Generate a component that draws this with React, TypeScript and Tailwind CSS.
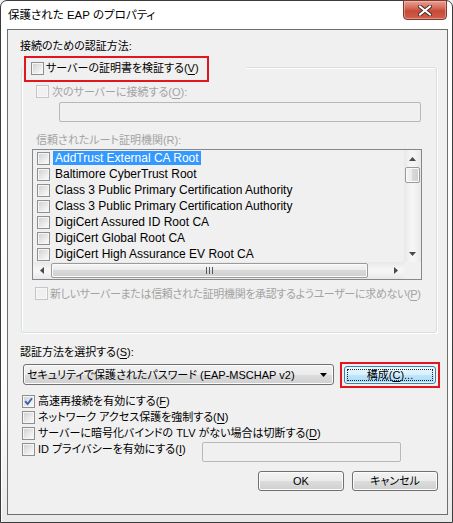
import React from "react";

const F = "font-['Liberation_Sans','Noto_Sans_CJK_JP',sans-serif] [font-feature-settings:'palt']";

function Check({ checked = false, disabled = false }: { checked?: boolean; disabled?: boolean }) {
  return (
    <span
      className={`relative block w-[13px] h-[13px] shrink-0 border ${
        disabled ? "border-[#c6c6c6] bg-[#f7f7f7]" : "border-[#8e8f8f] bg-[#f5f5f5]"
      }`}
    >
      <span
        className={`absolute inset-[1px] ${
          disabled ? "bg-[#f0f0f0]" : "bg-gradient-to-br from-[#d3d3d3] to-[#fafafa]"
        }`}
      />
      {checked && (
        <svg className="absolute left-[1px] top-[1px]" width="9" height="9" viewBox="0 0 9 9">
          <path d="M1.2 4.2 L3.6 7 L8 1.2" fill="none" stroke="#3c5ea8" strokeWidth="1.9" />
        </svg>
      )}
    </span>
  );
}

function U({ children }: { children: React.ReactNode }) {
  return <span className="underline underline-offset-[2px]">{children}</span>;
}

function WinButton({ children, className = "" }: { children: React.ReactNode; className?: string }) {
  return (
    <div
      className={`flex items-center justify-center rounded-[3px] border border-[#707070] bg-[linear-gradient(#f2f2f2_0%,#ebebeb_50%,#dddddd_50%,#cfcfcf_100%)] shadow-[inset_0_0_0_1px_#fcfcfc] text-black ${className}`}
    >
      {children}
    </div>
  );
}

const certs = [
  "AddTrust External CA Root",
  "Baltimore CyberTrust Root",
  "Class 3 Public Primary Certification Authority",
  "Class 3 Public Primary Certification Authority",
  "DigiCert Assured ID Root CA",
  "DigiCert Global Root CA",
  "DigiCert High Assurance EV Root CA",
];

function Tri({ dir }: { dir: "up" | "down" | "left" | "right" }) {
  const d =
    dir === "up"
      ? "M0 4 L3.5 0 L7 4 Z"
      : dir === "down"
      ? "M0 0 L7 0 L3.5 4 Z"
      : dir === "left"
      ? "M4 0 L4 7 L0 3.5 Z"
      : "M0 0 L4 3.5 L0 7 Z";
  const w = dir === "up" || dir === "down" ? 7 : 4;
  const h = dir === "up" || dir === "down" ? 4 : 7;
  return (
    <svg width={w} height={h} viewBox={`0 0 ${w} ${h}`}>
      <path d={d} fill="#4a4a4a" />
    </svg>
  );
}

export default function App() {
  return (
    <div className={`w-[453px] h-[523px] overflow-hidden bg-[#f0f0f0] ${F} text-[11px] text-black`}>
      <div className="flex flex-col w-[453px] h-[523px] rounded-t-[7px] border border-[#3b3b3b] bg-[linear-gradient(#ffffff,#fbfbfb_80%,#e9e9e9)] shadow-[inset_1px_1px_0_#ffffff]">
        {/* title bar */}
        <div className="flex h-[28px] shrink-0">
          <div className="pl-[7px] pt-[6px] text-[11.5px] leading-[16px] text-black">保護された EAP のプロパティ</div>
          <div className="ml-auto mr-[5px] -mt-[1px] flex h-[20px] w-[44px] items-center justify-center rounded-b-[4px] border border-[#7a3a33] bg-[linear-gradient(#e8a090_0%,#d7705f_35%,#c64a38_55%,#d0604c_100%)] shadow-[inset_0_0_0_1px_rgba(255,210,200,0.45)]">
            <svg width="14" height="11" viewBox="0 0 14 11">
              <path d="M2 1.5 L12 9.5 M12 1.5 L2 9.5" stroke="#4a2a28" strokeWidth="4" strokeLinecap="square" />
              <path d="M2 1.5 L12 9.5 M12 1.5 L2 9.5" stroke="#ffffff" strokeWidth="2" strokeLinecap="square" />
            </svg>
          </div>
        </div>

        {/* client area */}
        <div className="ml-[6px] w-[441px] h-[486px] border border-[#6e6e6e] bg-[#f0f0f0] flex flex-col">
          <div className="pl-[12px] pt-[8px] h-[24px] leading-[16px]">接続のための認証方法:</div>

          {/* group box */}
          <div className="relative ml-[13px] mt-[13px] w-[416px] h-[266px] rounded-[3px] border border-[#d5dfe5] shadow-[inset_1px_1px_0_#ffffff,1px_1px_0_#ffffff]">
            {/* group header */}
            <div className="absolute left-[0px] top-[-9px] w-[224px] h-[18px] bg-[#f0f0f0] flex items-center pl-[9px]">
              <Check />
              <span className="ml-[2px] leading-[16px] whitespace-nowrap">
                サーバーの証明書を検証する(<U>V</U>)
              </span>
            </div>
            {/* annotation */}
            <div className="absolute left-[2px] top-[-12px] w-[185px] h-[26px] border-2 border-[#e3151f]" />

            <div className="flex flex-col pt-[17px]">
              <div className="flex items-center h-[13px] pl-[14px] text-[#a3a3a3]">
                <Check disabled />
                <span className="ml-[3px] leading-[16px]">
                  次のサーバーに接続する(<U>O</U>):
                </span>
              </div>
              <div className="ml-[37px] mt-[4px] w-[362px] h-[20px] rounded-[2px] border border-[#b8b8b8] bg-[#f0f0f0]" />
              <div className="pl-[14px] mt-[10px] h-[16px] leading-[16px] text-[#a3a3a3]">
                信頼されたルート証明機関(R):
              </div>

              {/* listbox */}
              <div className="ml-[10px] mt-[1px] w-[390px] h-[131px] border border-[#828790] bg-[#f0f0f0] flex flex-col text-[12px]">
                <div className="flex h-[112px]">
                  <div className="flex-1 flex flex-col overflow-hidden">
                    {certs.map((c, i) => (
                      <div key={i} className="flex items-center h-[16px] pl-[4px] whitespace-nowrap">
                        <Check />
                        <span
                          className={`ml-[3px] px-[2px] h-[14px] leading-[14px] ${
                            i === 0 ? "bg-[#3399ff] text-white" : ""
                          }`}
                        >
                          {c}
                        </span>
                      </div>
                    ))}
                  </div>
                  {/* vertical scrollbar */}
                  <div className="w-[17px] h-[112px] flex flex-col bg-[linear-gradient(90deg,#e8e8e8,#f5f5f5_40%,#f5f5f5_60%,#e8e8e8)]">
                    <div className="h-[17px] flex items-center justify-center">
                      <Tri dir="up" />
                    </div>
                    <div className="mx-[1px] h-[16px] rounded-[2px] border border-[#9b9b9b] bg-[linear-gradient(90deg,#f6f6f6,#ebebeb_45%,#d9d9d9_50%,#cfcfcf)] shadow-[inset_0_0_0_1px_#fafafa]" />
                    <div className="flex-1" />
                    <div className="h-[17px] flex items-center justify-center">
                      <Tri dir="down" />
                    </div>
                  </div>
                </div>
                {/* horizontal scrollbar */}
                <div className="flex h-[17px]">
                  <div className="flex-1 flex bg-[linear-gradient(#e8e8e8,#f5f5f5_40%,#f5f5f5_60%,#e8e8e8)]">
                    <div className="w-[17px] flex items-center justify-center">
                      <Tri dir="left" />
                    </div>
                    <div className="ml-[1px] my-[1px] w-[317px] rounded-[2px] border border-[#9b9b9b] bg-[linear-gradient(#f6f6f6,#ebebeb_45%,#d9d9d9_50%,#cfcfcf)] shadow-[inset_0_0_0_1px_#fafafa] flex items-center justify-center gap-[2px]">
                      <span className="w-[1px] h-[7px] bg-[#555]" />
                      <span className="w-[1px] h-[7px] bg-[#555]" />
                      <span className="w-[1px] h-[7px] bg-[#555]" />
                    </div>
                    <div className="flex-1" />
                    <div className="w-[17px] flex items-center justify-center">
                      <Tri dir="right" />
                    </div>
                  </div>
                  <div className="w-[17px] bg-[#f0f0f0]" />
                </div>
              </div>

              <div className="flex items-center h-[13px] mt-[7px] pl-[13px] text-[#a3a3a3] whitespace-nowrap">
                <Check disabled />
                <span className="ml-[2px] leading-[16px] tracking-[-0.35px]">
                  新しいサーバーまたは信頼された証明機関を承認するようユーザーに求めない(<U>P</U>)
                </span>
              </div>
            </div>
          </div>

          <div className="pl-[12px] mt-[11px] h-[16px] leading-[16px]">
            認証方法を選択する(<U>S</U>):
          </div>

          <div className="flex mt-[2px] h-[26px]">
            <div className="ml-[15px] mt-[2px] w-[311px] h-[21px] rounded-[3px] border border-[#707070] bg-[linear-gradient(#f2f2f2_0%,#ebebeb_50%,#dddddd_50%,#cfcfcf_100%)] shadow-[inset_0_0_0_1px_#fcfcfc] flex items-center pl-[3px] pr-[6px]">
              <span className="leading-[16px] whitespace-nowrap">セキュリティで保護されたパスワード (EAP-MSCHAP v2)</span>
              <span className="ml-auto">
                <svg width="7" height="4" viewBox="0 0 7 4">
                  <path d="M0 0 L7 0 L3.5 4 Z" fill="#000" />
                </svg>
              </span>
            </div>
            <div className="ml-[6px] w-[100px] h-[26px] border-2 border-[#e3151f] p-[2px]">
              <div className="w-full h-[18px] rounded-[3px] border border-[#3c7fb1] bg-[linear-gradient(#eaf6fd_0%,#d9f0fc_50%,#bee6fd_50%,#a7d9f5_100%)] shadow-[inset_0_0_0_1px_#e6f4fc] p-[2px]">
                <div className="w-full h-full border border-dotted border-[#222] flex items-center justify-center leading-[12px]">
                  構成(<U>C</U>)...
                </div>
              </div>
            </div>
          </div>

          <div className="flex flex-col mt-[5px] pl-[14px]">
            <div className="flex items-center h-[16px]">
              <Check checked />
              <span className="ml-[3px] leading-[16px]">
                高速再接続を有効にする(<U>F</U>)
              </span>
            </div>
            <div className="flex items-center h-[16px]">
              <Check />
              <span className="ml-[3px] leading-[16px]">
                ネットワーク アクセス保護を強制する(<U>N</U>)
              </span>
            </div>
            <div className="flex items-center h-[16px]">
              <Check />
              <span className="ml-[3px] leading-[16px]">
                サーバーに暗号化バインドの TLV がない場合は切断する(<U>D</U>)
              </span>
            </div>
            <div className="flex items-start h-[21px]">
              <div className="flex items-center h-[16px] w-[180px]">
                <Check />
                <span className="ml-[3px] leading-[16px]">
                  ID プライバシーを有効にする(<U>I</U>)
                </span>
              </div>
              <div className="mt-[1px] w-[199px] h-[20px] rounded-[2px] border border-[#b8b8b8] bg-[#f0f0f0]" />
            </div>
          </div>

          <div className="flex justify-end gap-[8px] mt-[9px] pr-[9px]">
            <WinButton className="w-[86px] h-[20px]">OK</WinButton>
            <WinButton className="w-[86px] h-[20px]">キャンセル</WinButton>
          </div>
        </div>
      </div>
    </div>
  );
}
